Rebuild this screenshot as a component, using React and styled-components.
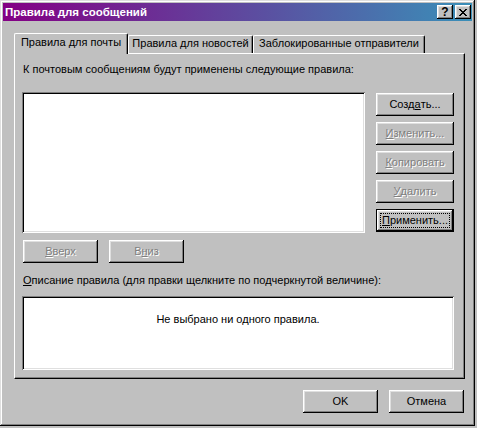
import styled, { createGlobalStyle } from "styled-components";

const GlobalStyle = createGlobalStyle`
  html, body {
    margin: 0;
    padding: 0;
    background: #c0c0c0;
  }
  body {
    font-family: "Liberation Sans", Arial, sans-serif;
    font-size: 11px;
    color: #000;
  }
`;

const raised = `
  box-shadow: inset -1px -1px #000, inset 1px 1px #fff,
    inset -2px -2px #808080, inset 2px 2px #dfdfdf;
`;

const sunken = `
  box-shadow: inset 1px 1px #808080, inset -1px -1px #fff,
    inset 2px 2px #000, inset -2px -2px #dfdfdf;
`;

const Window = styled.div`
  box-sizing: border-box;
  width: 475px;
  height: 426px;
  padding: 3px;
  display: flex;
  flex-direction: column;
  background: #c0c0c0;
  box-shadow: inset -1px -1px #000, inset 1px 1px #dfdfdf,
    inset -2px -2px #808080, inset 2px 2px #fff;
`;

const TitleBar = styled.div`
  height: 18px;
  display: flex;
  align-items: center;
  padding: 0 1px 0 2px;
  background: linear-gradient(90deg, #840084, #3a8fb8);
  color: #fff;
  font-weight: bold;
  font-size: 11.5px;
`;

const TitleText = styled.div`
  flex: 1;
  white-space: nowrap;
`;

const TitleButton = styled.div`
  box-sizing: border-box;
  width: 16px;
  height: 14px;
  margin-left: 2px;
  display: flex;
  align-items: center;
  justify-content: center;
  background: #c0c0c0;
  color: #000;
  font-weight: bold;
  font-size: 12px;
  line-height: 14px;
  ${raised}
`;

const Body = styled.div`
  flex: 1;
  display: flex;
  flex-direction: column;
  padding: 12px 7px 0 11px;
`;

const TabRow = styled.div`
  display: flex;
  align-items: flex-start;
  height: 20px;
  position: relative;
  z-index: 1;
`;

const Tab = styled.div`
  box-sizing: border-box;
  width: ${(p) => p.$w}px;
  height: ${(p) => (p.$active ? 21 : 18)}px;
  margin-top: ${(p) => (p.$active ? 0 : 2)}px;
  padding-top: ${(p) => (p.$active ? 2 : 1)}px;
  border-top: 1px solid #fff;
  border-left: 1px solid #fff;
  border-right: 1px solid #000;
  border-radius: 2px 2px 0 0;
  box-shadow: inset -1px 0 #808080;
  background: #c0c0c0;
  line-height: 13px;
  text-align: center;
  white-space: nowrap;
`;

const Panel = styled.div`
  box-sizing: border-box;
  width: 451px;
  height: 326px;
  padding: 9px 10px 0 7px;
  border: 1px solid;
  border-color: #fff #000 #000 #fff;
  box-shadow: inset -1px -1px #808080;
  display: flex;
  flex-direction: column;
`;

const Label = styled.div`
  line-height: 13px;
  padding-left: 1px;
  margin-top: ${(p) => p.$mt || 0}px;
  white-space: nowrap;
`;

const ListRow = styled.div`
  display: flex;
  gap: 11px;
  margin-top: 16px;
`;

const ListBox = styled.div`
  width: 343px;
  height: 141px;
  background: #fff;
  ${sunken}
`;

const ButtonColumn = styled.div`
  display: flex;
  flex-direction: column;
  gap: 6px;
  padding-top: 1px;
`;

const Button = styled.div`
  box-sizing: border-box;
  position: relative;
  width: ${(p) => p.$w || 75}px;
  height: 23px;
  display: flex;
  align-items: center;
  justify-content: center;
  background: #c0c0c0;
  line-height: 13px;
  white-space: nowrap;
  color: ${(p) => (p.$disabled ? "#808080" : "#000")};
  text-shadow: ${(p) => (p.$disabled ? "1px 1px 0 #fff" : "none")};
  border: ${(p) => (p.$default ? "1px solid #000" : "none")};
  ${raised}
`;

const FocusRing = styled.span`
  position: absolute;
  top: 3px;
  left: 3px;
  right: 3px;
  bottom: 3px;
  border: 1px dotted #000;
`;

const MoveRow = styled.div`
  display: flex;
  gap: 11px;
  margin-top: 7px;
  padding-left: 1px;
`;

const DescBox = styled.div`
  box-sizing: border-box;
  width: 432px;
  height: 74px;
  margin-top: 9px;
  padding-top: 17px;
  background: #fff;
  line-height: 13px;
  text-align: center;
  ${sunken}
`;

const Footer = styled.div`
  display: flex;
  justify-content: flex-end;
  gap: 11px;
  margin-top: 11px;
  padding-right: 1px;
`;

const CloseGlyph = () => (
  <svg width="8" height="7" viewBox="0 0 8 7" shapeRendering="crispEdges">
    {[0, 1, 2, 3, 4, 5, 6].map((i) => (
      <g key={i} fill="#000">
        <rect x={i} y={i} width="2" height="1" />
        <rect x={6 - i} y={i} width="2" height="1" />
      </g>
    ))}
  </svg>
);

export default function App() {
  return (
    <>
      <GlobalStyle />
      <Window>
        <TitleBar>
          <TitleText>Правила для сообщений</TitleText>
          <TitleButton>?</TitleButton>
          <TitleButton>
            <CloseGlyph />
          </TitleButton>
        </TitleBar>
        <Body>
          <TabRow>
            <Tab $w={114} $active>Правила для почты</Tab>
            <Tab $w={125}>Правила для новостей</Tab>
            <Tab $w={172}>Заблокированные отправители</Tab>
          </TabRow>
          <Panel>
            <Label>К почтовым сообщениям будут применены следующие правила:</Label>
            <ListRow>
              <ListBox />
              <ButtonColumn>
                <Button $w={78}>Созд<u>а</u>ть...</Button>
                <Button $w={78} $disabled><u>И</u>зменить...</Button>
                <Button $w={78} $disabled><u>К</u>опировать</Button>
                <Button $w={78} $disabled><u>У</u>далить</Button>
                <Button $w={78} $default>
                  <u>П</u>рименить...
                  <FocusRing />
                </Button>
              </ButtonColumn>
            </ListRow>
            <MoveRow>
              <Button $disabled><u>В</u>верх</Button>
              <Button $disabled>В<u>н</u>из</Button>
            </MoveRow>
            <Label $mt={11}>
              <u>О</u>писание правила (для правки щелкните по подчеркнутой величине):
            </Label>
            <DescBox>Не выбрано ни одного правила.</DescBox>
          </Panel>
          <Footer>
            <Button>OK</Button>
            <Button>Отмена</Button>
          </Footer>
        </Body>
      </Window>
    </>
  );
}
